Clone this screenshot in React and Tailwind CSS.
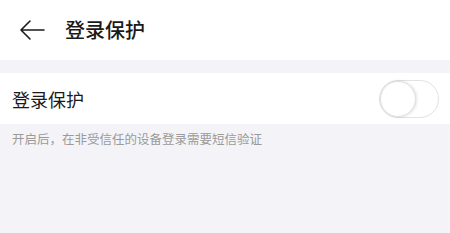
export default function App() {
  return (
    <div
      className="w-[450px] h-[233px] bg-[#f4f4f8] flex flex-col overflow-hidden"
      style={{ fontFamily: '"Noto Sans CJK SC", "Noto Sans", sans-serif' }}
    >
      <div className="h-[60px] bg-white flex items-center">
        <svg width="26" height="22" viewBox="0 0 26 22" className="ml-[19px]" fill="none">
          <path d="M25 11H2M11 2L2 11L11 20" stroke="#1a1a1a" strokeWidth="1.6" strokeLinecap="round" strokeLinejoin="round" />
        </svg>
        <span className="ml-[20px] text-[20px] leading-none text-[#1a1a1a] font-medium">登录保护</span>
      </div>
      <div className="h-[13px]" />
      <div className="h-[51px] bg-white flex items-center justify-between pl-[12px] pr-[11px]">
        <span className="text-[18px] leading-none text-[#1a1a1a]">登录保护</span>
        <div className="w-[60px] h-[38px] rounded-full border border-[#e2e2e2] bg-white relative">
          <div className="absolute left-0 top-0 w-[36px] h-[36px] rounded-full bg-white border border-[#e0e0e0] shadow-[1px_0_3px_rgba(0,0,0,0.12)]" />
        </div>
      </div>
      <div className="pl-[12px] pt-[6px] text-[12.5px] leading-[18px] text-[#9a9a9a]">
        开启后，在非受信任的设备登录需要短信验证
      </div>
    </div>
  );
}
